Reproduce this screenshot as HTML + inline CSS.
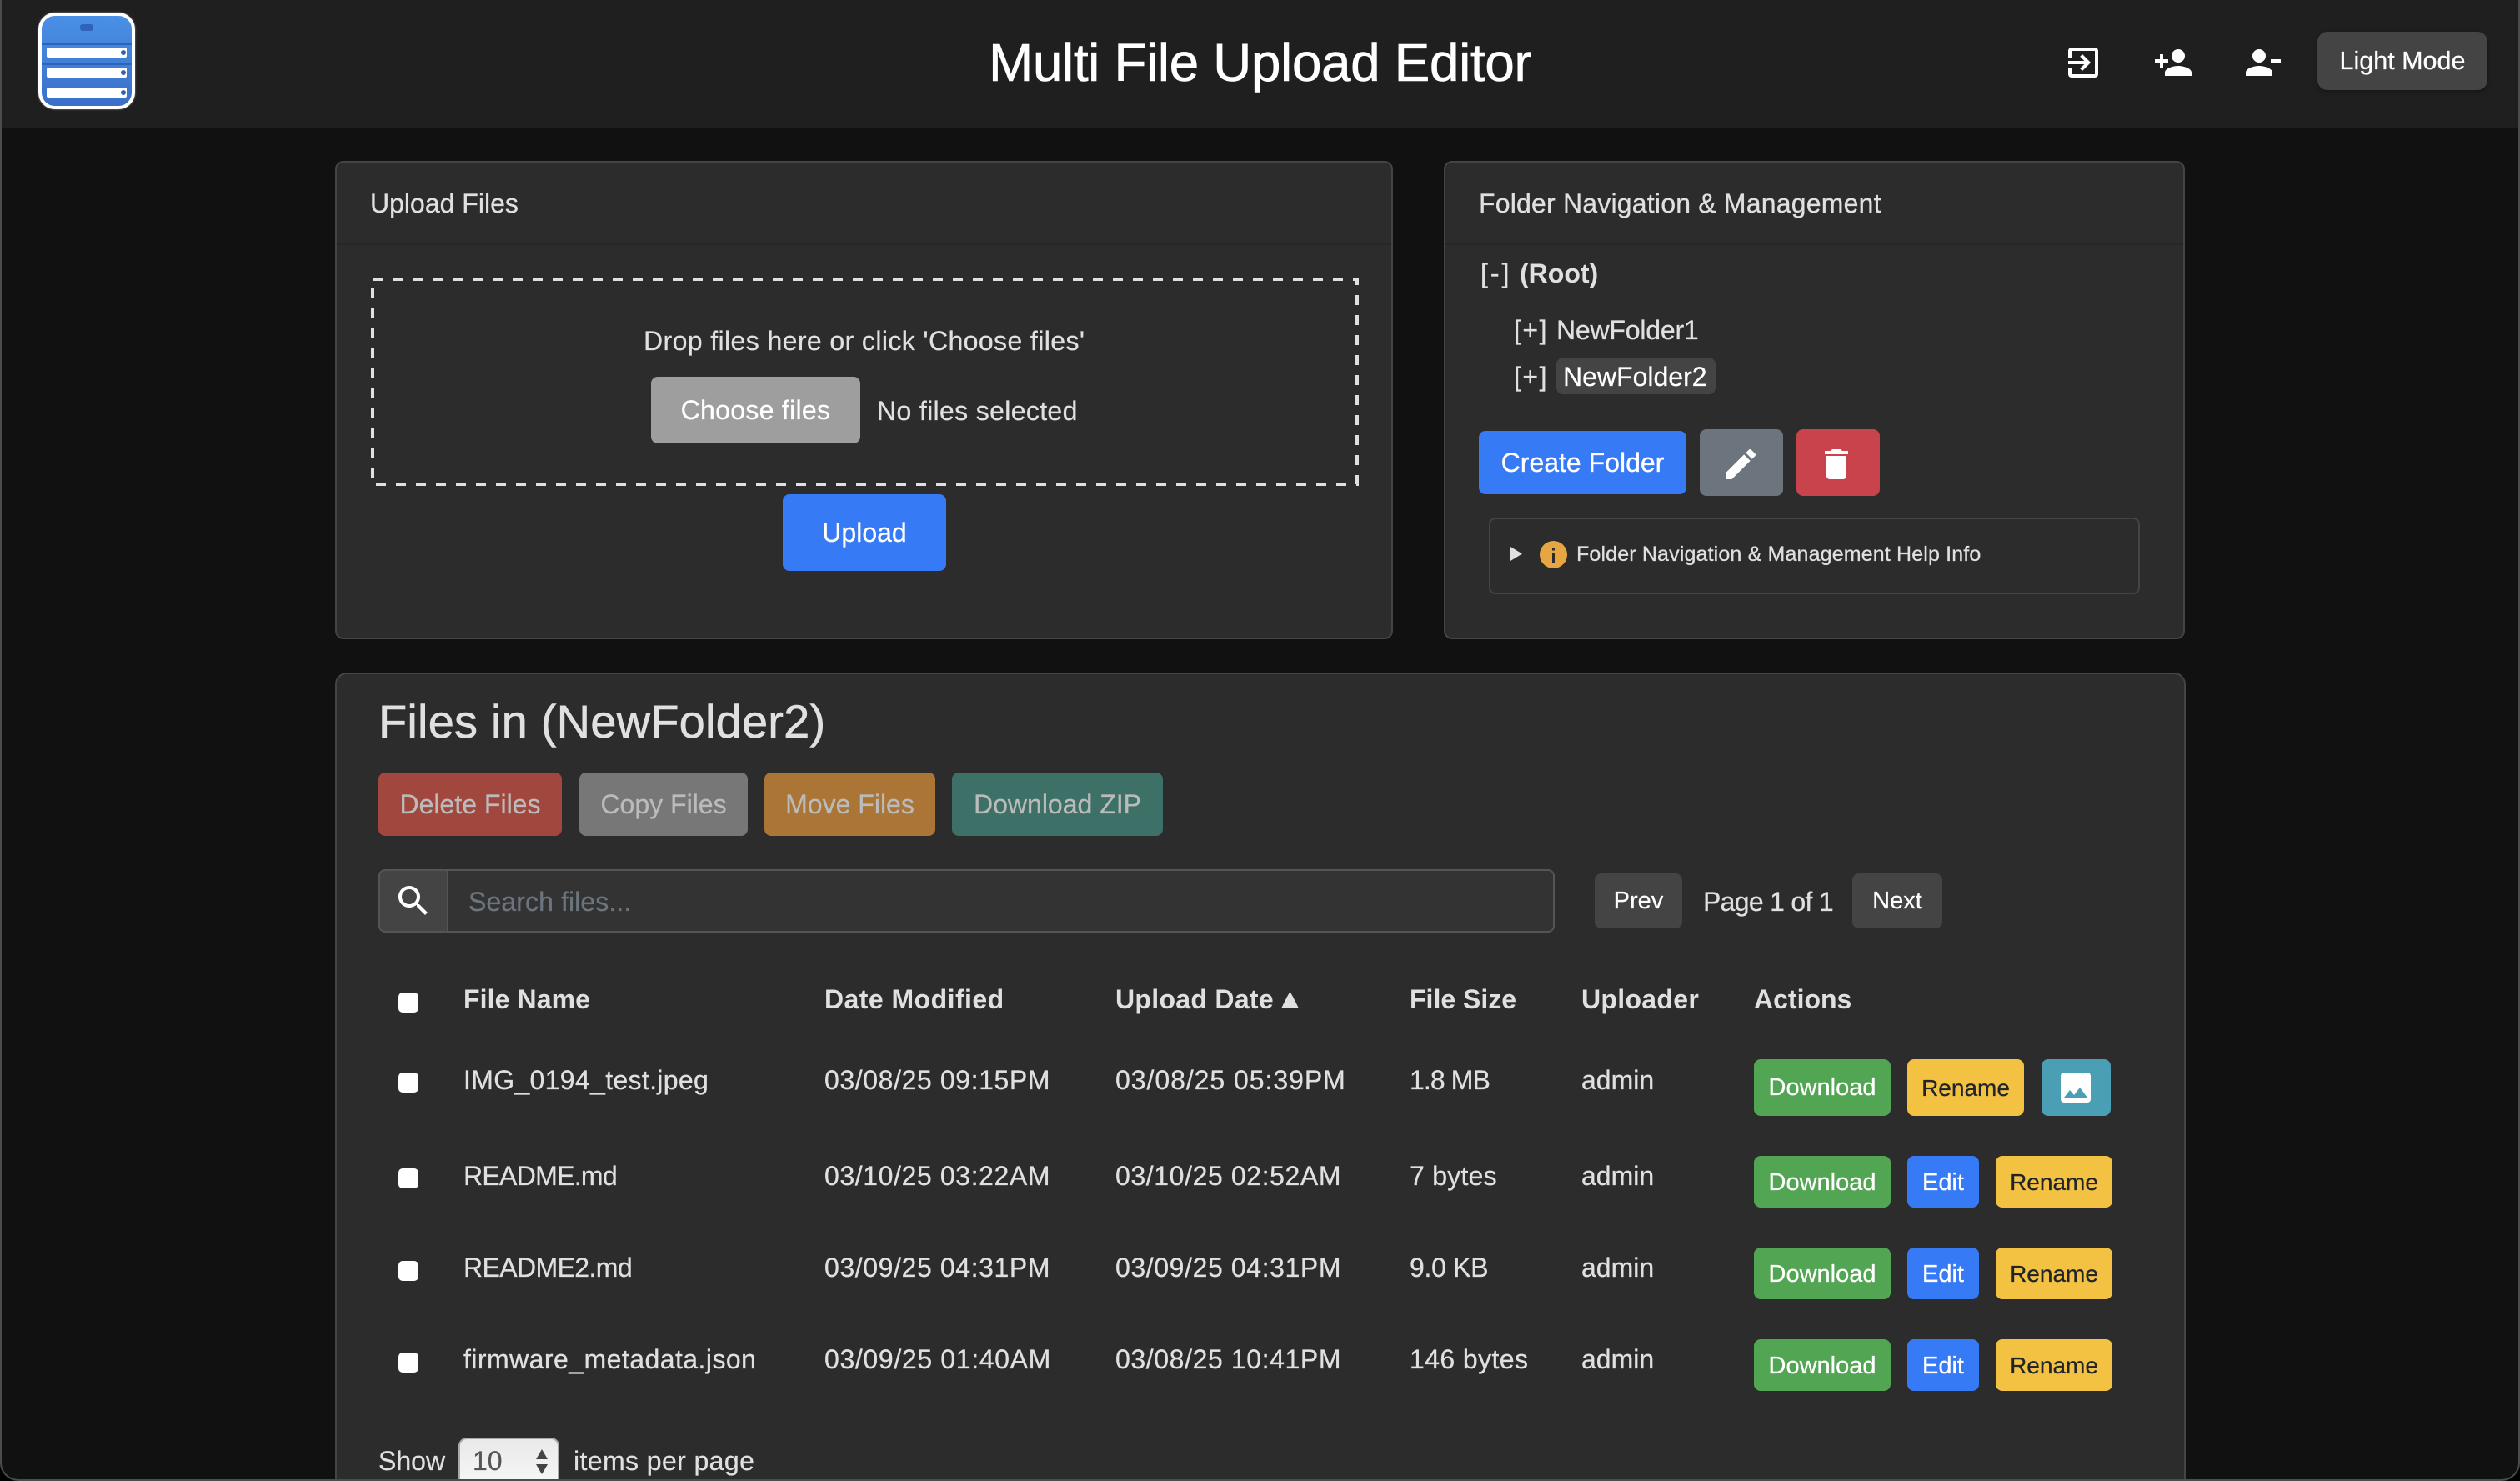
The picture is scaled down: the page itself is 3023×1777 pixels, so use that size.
<!DOCTYPE html>
<html lang="en"><head><meta charset="utf-8"><title>Multi File Upload Editor</title>
<style>
*{box-sizing:border-box}
html,body{margin:0;padding:0;width:3023px;height:1777px;overflow:hidden;background:#111}
body{position:relative;font-family:"Liberation Sans",sans-serif;color:#e0e0e0}
.a{position:absolute}
.t{position:absolute;white-space:nowrap;line-height:60px;height:60px;font-size:32px;-webkit-text-stroke:.25px currentColor}
.b{position:absolute;display:flex;align-items:center;justify-content:center;border-radius:8px;white-space:nowrap;font-size:32px;color:#fff;-webkit-text-stroke:.25px currentColor}
.card{position:absolute;background:#2c2c2c;border:2px solid #444;border-radius:10px}
.hl{position:absolute;left:0;right:0;height:2px;background:#262626}
.h{font-weight:bold;-webkit-text-stroke:0}
.c{position:absolute;width:24px;height:24px;background:#fff;border-radius:5px;left:478px}
.dl{left:2104px;width:164px;background:#52a552;font-size:29px;padding-top:2px}
.ed{left:2288px;width:86px;background:#367af6;font-size:29px;padding-top:2px}
.rn{background:#f4c242;color:#212529;font-size:28px;padding-top:2px}
.d{letter-spacing:.6px}
svg{position:absolute;display:block;fill:#fff}
</style></head><body>

<!-- header -->
<div class="a" style="left:0;top:0;width:3023px;height:153px;background:#1f1f1f"></div>
<div class="a" style="left:46px;top:15px;width:116px;height:116px;border:4px solid #fff;border-radius:20px;background:linear-gradient(#4a90e6,#3a6fc8);overflow:hidden;box-shadow:0 0 2px rgba(255,255,255,.5)"></div>
<div class="a" style="left:96px;top:29px;width:16px;height:8px;background:#2f62b8;border-radius:3px"></div>
<div class="a" style="left:50px;top:51px;width:108px;height:3px;background:#2f62b8"></div>
<div class="a" style="left:56px;top:57px;width:96px;height:12px;background:#fff;border-radius:2px"></div>
<div class="a" style="left:145px;top:60px;width:6px;height:6px;background:#2f62b8;border-radius:50%"></div>
<div class="a" style="left:50px;top:75px;width:108px;height:3px;background:#2f62b8"></div>
<div class="a" style="left:56px;top:81px;width:96px;height:12px;background:#fff;border-radius:2px"></div>
<div class="a" style="left:145px;top:84px;width:6px;height:6px;background:#2f62b8;border-radius:50%"></div>
<div class="a" style="left:56px;top:105px;width:96px;height:12px;background:#fff;border-radius:2px"></div>
<div class="a" style="left:145px;top:108px;width:6px;height:6px;background:#2f62b8;border-radius:50%"></div>

<div class="t" style="left:1186px;top:45px;font-size:64px;color:#fff;letter-spacing:-.43px;-webkit-text-stroke:.6px #fff">Multi File Upload Editor</div>

<svg style="left:2475px;top:51px" width="48" height="48" viewBox="0 0 24 24"><path d="M10.09 15.59L11.5 17l5-5-5-5-1.41 1.41L12.67 11H3v2h9.67l-2.58 2.59zM19 3H5c-1.11 0-2 .9-2 2v4h2V5h14v14H5v-4H3v4c0 1.1.89 2 2 2h14c1.1 0 2-.9 2-2V5c0-1.1-.9-2-2-2z"/></svg>
<svg style="left:2583px;top:51px" width="48" height="48" viewBox="0 0 24 24"><path d="M15 12c2.21 0 4-1.79 4-4s-1.79-4-4-4-4 1.79-4 4 1.79 4 4 4zm-9-2V7H4v3H1v2h3v3h2v-3h3v-2H6zm9 4c-2.67 0-8 1.34-8 4v2h16v-2c0-2.66-5.33-4-8-4z"/></svg>
<svg style="left:2690px;top:51px" width="48" height="48" viewBox="0 0 24 24"><path d="M14 8c0-2.21-1.79-4-4-4S6 5.79 6 8s1.79 4 4 4 4-1.79 4-4zm3 2v2h6v-2h-6zM2 18v2h16v-2c0-2.66-5.33-4-8-4s-8 1.34-8 4z"/></svg>
<div class="b" style="left:2780px;top:38px;width:204px;height:70px;background:#444;border-radius:12px;font-size:30.5px;padding-top:1px;box-shadow:0 2px 6px rgba(0,0,0,.3)">Light Mode</div>

<!-- upload card -->
<div class="card" style="left:402px;top:193px;width:1269px;height:574px"><div class="hl" style="top:97px"></div></div>
<div class="t" style="left:444px;top:214px;color:#e0e0e0">Upload Files</div>
<svg style="left:445px;top:333px;fill:none" width="1185" height="250"><rect x="2" y="2" width="1181" height="246" stroke="#e0e0e0" stroke-width="4" stroke-dasharray="12 12" fill="none"/></svg>
<div class="t" style="left:772px;top:379px;letter-spacing:.4px">Drop files here or click 'Choose files'</div>
<div class="b" style="left:781px;top:452px;width:251px;height:80px;background:#9e9e9e;letter-spacing:.3px">Choose files</div>
<div class="t" style="left:1052px;top:463px;letter-spacing:.35px">No files selected</div>
<div class="b" style="left:939px;top:593px;width:196px;height:92px;background:#367af6">Upload</div>

<!-- folder card -->
<div class="card" style="left:1732px;top:193px;width:889px;height:574px"><div class="hl" style="top:97px"></div></div>
<div class="t" style="left:1774px;top:214px;letter-spacing:.2px">Folder Navigation &amp; Management</div>
<div class="t" style="left:1776px;top:298px;letter-spacing:3px">[-]</div>
<div class="t h" style="left:1823px;top:298px">(Root)</div>
<div class="t" style="left:1816px;top:366px;letter-spacing:1.5px">[+]</div>
<div class="t" style="left:1867px;top:366px;letter-spacing:-.2px">NewFolder1</div>
<div class="t" style="left:1816px;top:422px;letter-spacing:1.5px">[+]</div>
<div class="a" style="left:1867px;top:429px;width:191px;height:44px;background:#444;border-radius:8px"></div>
<div class="t" style="left:1875px;top:422px;color:#fff">NewFolder2</div>
<div class="b" style="left:1774px;top:517px;width:249px;height:76px;background:#367af6">Create Folder</div>
<div class="b" style="left:2039px;top:515px;width:100px;height:80px;background:#6c757d"></div>
<svg style="left:2064px;top:533px" width="48" height="48" viewBox="0 0 24 24"><path d="M3 17.25V21h3.75L17.81 9.94l-3.75-3.75L3 17.25zM20.71 7.04c.39-.39.39-1.02 0-1.41l-2.34-2.34c-.39-.39-1.02-.39-1.41 0l-1.83 1.83 3.75 3.75 1.83-1.83z"/></svg>
<div class="b" style="left:2155px;top:515px;width:100px;height:80px;background:#c8434c"></div>
<svg style="left:2179px;top:533px" width="48" height="48" viewBox="0 0 24 24"><path d="M6 19c0 1.1.9 2 2 2h8c1.1 0 2-.9 2-2V7H6v12zM19 4h-3.5l-1-1h-5l-1 1H5v2h14V4z"/></svg>
<div class="a" style="left:1786px;top:621px;width:781px;height:92px;border:2px solid #444;border-radius:8px"></div>
<svg style="left:1812px;top:656px;fill:#e0e0e0" width="14" height="17" viewBox="0 0 14 17"><path d="M0 0L14 8.500L0 17z"/></svg>
<svg style="left:1847px;top:649px" width="33" height="33" viewBox="0 0 33 33"><circle cx="16.500" cy="16.500" r="16.500" fill="#e8a643"/><rect x="15" y="14" width="3" height="12" fill="#2c2c2c"/><rect x="15" y="8" width="3" height="3.500" fill="#2c2c2c"/></svg>
<div class="t" style="left:1891px;top:635px;font-size:25px;letter-spacing:.15px">Folder Navigation &amp; Management Help Info</div>

<!-- files card -->
<div class="card" style="left:402px;top:807px;width:2220px;height:1000px;border-radius:14px"></div>
<div class="t" style="left:454px;top:836px;font-size:56px;letter-spacing:.2px;-webkit-text-stroke:.6px #e0e0e0">Files in (NewFolder2)</div>
<div class="b" style="left:454px;top:927px;width:220px;height:76px;background:#a2473e;color:#bbb;font-size:32px">Delete Files</div>
<div class="b" style="left:695px;top:927px;width:202px;height:76px;background:#777;color:#bbb;font-size:32px">Copy Files</div>
<div class="b" style="left:917px;top:927px;width:205px;height:76px;background:#aa7535;color:#bbb;font-size:32px">Move Files</div>
<div class="b" style="left:1142px;top:927px;width:253px;height:76px;background:#3d7067;color:#bbb;font-size:32px">Download ZIP</div>

<div class="a" style="left:454px;top:1043px;width:84px;height:76px;background:#444;border:2px solid #555;border-radius:8px 0 0 8px"></div>
<svg style="left:472px;top:1057px" width="48" height="48" viewBox="0 0 24 24"><path d="M15.500 14h-.79l-.28-.27C15.410 12.590 16 11.110 16 9.500 16 5.910 13.090 3 9.500 3S3 5.910 3 9.500 5.910 16 9.500 16c1.610 0 3.090-.59 4.230-1.570l.27.28v.79l5 4.990L20.490 19l-4.990-5zm-6 0C7.010 14 5 11.990 5 9.500S7.010 5 9.500 5 14 7.010 14 9.500 11.990 14 9.500 14z"/></svg>
<div class="a" style="left:536px;top:1043px;width:1329px;height:76px;background:#333;border:2px solid #555;border-radius:0 8px 8px 0"></div>
<div class="t" style="left:562px;top:1052px;color:#6c757d;letter-spacing:.1px">Search files...</div>
<div class="b" style="left:1913px;top:1048px;width:105px;height:66px;background:#444;font-size:29px;padding-top:1px">Prev</div>
<div class="t" style="left:2043px;top:1052px;letter-spacing:-.7px">Page 1 of 1</div>
<div class="b" style="left:2222px;top:1048px;width:108px;height:66px;background:#444;font-size:29px;padding-top:1px">Next</div>

<!-- table header -->
<div class="c" style="top:1191px"></div>
<div class="t h" style="left:556px;top:1169px;letter-spacing:.1px">File Name</div>
<div class="t h" style="left:989px;top:1169px;letter-spacing:.45px">Date Modified</div>
<div class="t h" style="left:1338px;top:1169px;letter-spacing:.3px">Upload Date</div>
<svg style="left:1537px;top:1190px;fill:#e0e0e0" width="21" height="20" viewBox="0 0 21 20"><path d="M10.500 0L14 6L21 20H0L7 6z"/></svg>
<div class="t h" style="left:1691px;top:1169px">File Size</div>
<div class="t h" style="left:1897px;top:1169px;letter-spacing:.3px">Uploader</div>
<div class="t h" style="left:2104px;top:1169px">Actions</div>

<!-- row 1 -->
<div class="c" style="top:1287px"></div>
<div class="t" style="left:556px;top:1266px;letter-spacing:.33px">IMG_0194_test.jpeg</div>
<div class="t d" style="left:989px;top:1266px">03/08/25 09:15PM</div>
<div class="t" style="left:1338px;top:1266px;letter-spacing:.95px">03/08/25 05:39PM</div>
<div class="t" style="left:1691px;top:1266px;letter-spacing:-.9px">1.8 MB</div>
<div class="t" style="left:1897px;top:1266px">admin</div>
<div class="b dl" style="top:1271px;height:68px;padding-top:0">Download</div>
<div class="b rn" style="left:2288px;top:1271px;width:140px;height:68px">Rename</div>
<div class="b" style="left:2449px;top:1271px;width:83px;height:68px;background:#4a9fb5"></div>
<svg style="left:2466px;top:1281px" width="48" height="48" viewBox="0 0 24 24"><path d="M21 19V5c0-1.100-.9-2-2-2H5c-1.100 0-2 .9-2 2v14c0 1.100.9 2 2 2h14c1.100 0 2-.9 2-2zM8.500 13.500l2.500 3.010L14.500 12l4.500 6H5l3.500-4.500z"/></svg>

<!-- row 2 -->
<div class="c" style="top:1402px"></div>
<div class="t" style="left:556px;top:1381px;letter-spacing:-.7px">README.md</div>
<div class="t d" style="left:989px;top:1381px">03/10/25 03:22AM</div>
<div class="t d" style="left:1338px;top:1381px">03/10/25 02:52AM</div>
<div class="t" style="left:1691px;top:1381px;letter-spacing:.25px">7 bytes</div>
<div class="t" style="left:1897px;top:1381px">admin</div>
<div class="b dl" style="top:1387px;height:62px">Download</div>
<div class="b ed" style="top:1387px;height:62px">Edit</div>
<div class="b rn" style="left:2394px;top:1387px;width:140px;height:62px">Rename</div>

<!-- row 3 -->
<div class="c" style="top:1513px"></div>
<div class="t" style="left:556px;top:1491px;letter-spacing:-.6px">README2.md</div>
<div class="t d" style="left:989px;top:1491px">03/09/25 04:31PM</div>
<div class="t d" style="left:1338px;top:1491px">03/09/25 04:31PM</div>
<div class="t" style="left:1691px;top:1491px;letter-spacing:-.3px">9.0 KB</div>
<div class="t" style="left:1897px;top:1491px">admin</div>
<div class="b dl" style="top:1497px;height:62px">Download</div>
<div class="b ed" style="top:1497px;height:62px">Edit</div>
<div class="b rn" style="left:2394px;top:1497px;width:140px;height:62px">Rename</div>

<!-- row 4 -->
<div class="c" style="top:1623px"></div>
<div class="t" style="left:556px;top:1601px;letter-spacing:.45px">firmware_metadata.json</div>
<div class="t" style="left:989px;top:1601px;letter-spacing:.65px">03/09/25 01:40AM</div>
<div class="t d" style="left:1338px;top:1601px">03/08/25 10:41PM</div>
<div class="t" style="left:1691px;top:1601px;letter-spacing:.4px">146 bytes</div>
<div class="t" style="left:1897px;top:1601px">admin</div>
<div class="b dl" style="top:1607px;height:62px">Download</div>
<div class="b ed" style="top:1607px;height:62px">Edit</div>
<div class="b rn" style="left:2394px;top:1607px;width:140px;height:62px">Rename</div>

<!-- footer -->
<div class="t" style="left:454px;top:1723px">Show</div>
<div class="a" style="left:550px;top:1725px;width:121px;height:70px;background:linear-gradient(#e9e9e9,#fafafa);border:2px solid #aaa;border-radius:10px"></div>
<div class="t" style="left:567px;top:1723px;color:#555">10</div>
<svg style="left:642px;top:1739px;fill:#444" width="16" height="30" viewBox="0 0 16 30"><path d="M8 0L15 12H1zM8 30L1 18h14z"/></svg>
<div class="t" style="left:688px;top:1723px;letter-spacing:.4px">items per page</div>

<!-- window frame -->
<div class="a" style="left:0;top:-10px;width:3023px;height:1787px;border:2px solid #4c4c4c;border-radius:0 0 22px 22px;box-shadow:0 0 0 40px #000;pointer-events:none"></div>
</body></html>
